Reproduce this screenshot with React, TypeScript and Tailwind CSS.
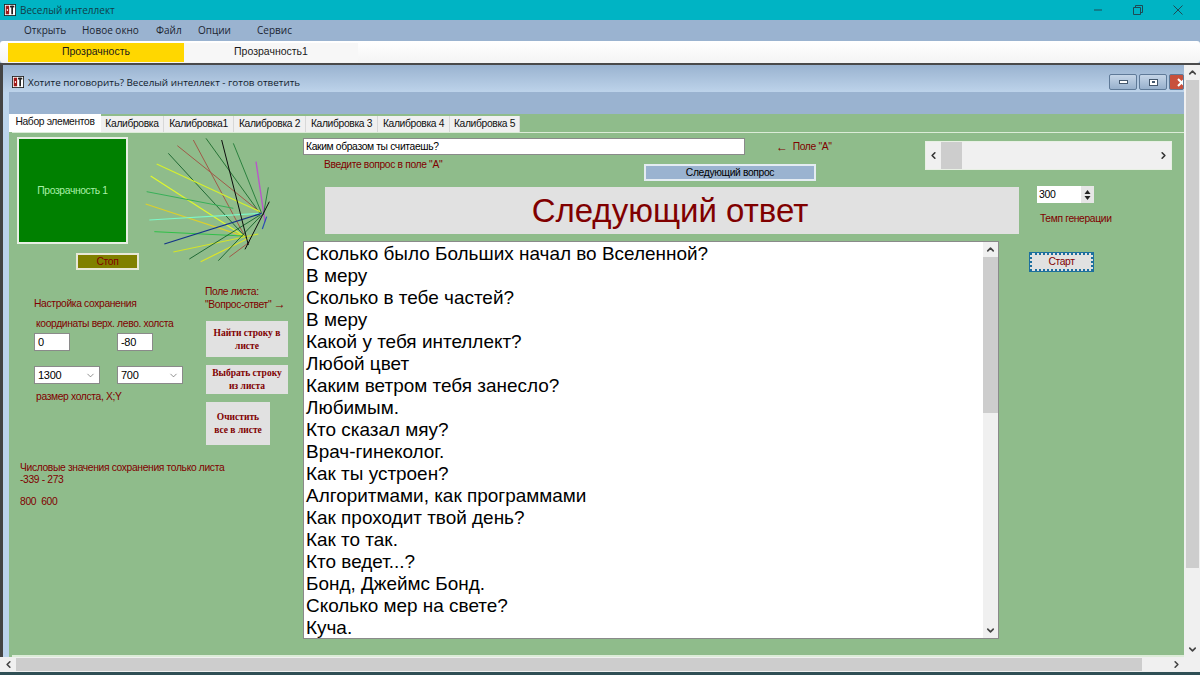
import type { ReactNode } from "react"
import { ChevronDown, ChevronLeft, ChevronRight, ChevronUp } from "lucide-react"

const tabs = [
  { label: "Калибровка", w: "w-[63px]" },
  { label: "Калибровка1", w: "w-[70px]" },
  { label: "Калибровка 2", w: "w-[72px]" },
  { label: "Калибровка 3", w: "w-[72px]" },
  { label: "Калибровка 4", w: "w-[72px]" },
  { label: "Калибровка 5", w: "w-[70px]" },
]

const menu = [
  { label: "Открыть", w: "w-[58px]" },
  { label: "Новое окно", w: "w-[74px]" },
  { label: "Файл", w: "w-[42px]" },
  { label: "Опции", w: "w-[59px]" },
  { label: "Сервис", w: "w-[60px]" },
]

const answers = [
  "Сколько было Больших начал во Вселенной?",
  "В меру",
  "Сколько в тебе частей?",
  "В меру",
  "Какой у тебя интеллект?",
  "Любой цвет",
  "Каким ветром тебя занесло?",
  "Любимым.",
  "Кто сказал мяу?",
  "Врач-гинеколог.",
  "Как ты устроен?",
  "Алгоритмами, как программами",
  "Как проходит твой день?",
  "Как то так.",
  "Кто ведет...?",
  "Бонд, Джеймс Бонд.",
  "Сколько мер на свете?",
  "Куча.",
]

// x1, y1, x2, y2, colour, width (3x crop coordinates)
const rays: [number, number, number, number, string, number][] = [
  [310, 40, 395, 250, "#1f7a35", 0.9],
  [228, 25, 390, 250, "#1a6a2a", 0.9],
  [190, 30, 345, 320, "#a05a48", 1],
  [142, 47, 395, 250, "#a05a48", 1],
  [115, 70, 350, 325, "#14602a", 0.9],
  [80, 102, 390, 245, "#d6f02c", 1.2],
  [62, 138, 345, 320, "#e0f82c", 1.2],
  [50, 185, 310, 235, "#38b058", 1],
  [47, 222, 345, 320, "#dcd02c", 1.2],
  [58, 270, 395, 250, "#7cf8c8", 1.2],
  [73, 305, 340, 318, "#30c048", 1],
  [130, 366, 385, 312, "#d4e428", 1.2],
  [178, 387, 390, 255, "#14602a", 0.9],
  [212, 395, 355, 325, "#dce428", 1.2],
  [265, 392, 395, 255, "#14602a", 0.9],
  [298, 381, 360, 335, "#a05a48", 1],
  [378, 95, 405, 275, "#b858c8", 1.4],
  [415, 172, 400, 255, "#1f7a35", 0.9],
  [410, 260, 397, 297, "#2a50b0", 1.2],
  [103, 342, 395, 250, "#143488", 1.3],
  [275, 30, 355, 345, "#0c0c0c", 1],
  [418, 215, 345, 358, "#0c0c0c", 1],
]

function AppIcon({ size }: { size: number }) {
  return (
    <svg width={size} height={size} viewBox="0 0 14 14" className="shrink-0">
      <rect x="0.5" y="0.5" width="13" height="13" fill="#fff" stroke="#222" />
      <rect x="2" y="2" width="4" height="10" fill="#a01818" />
      <rect x="7" y="2" width="5" height="2" fill="#222" />
      <rect x="8.5" y="2" width="2" height="10" fill="#222" />
      <rect x="3.3" y="6" width="1.4" height="2" fill="#fff" />
    </svg>
  )
}

function MdiButton({ children, className }: { children: ReactNode; className: string }) {
  return (
    <div className={`flex h-[16px] items-center justify-center rounded-[2px] border border-[#5f7a98] ${className}`}>
      {children}
    </div>
  )
}

function NumberField({ value }: { value: string }) {
  return (
    <div className="flex h-[18px] w-[36px] items-center border border-[#8a8a8a] bg-white pl-[3px] text-[11px] tracking-[-0.3px] text-black">
      {value}
    </div>
  )
}

function ComboField({ value, w }: { value: string; w: string }) {
  return (
    <div className={`flex h-[18px] items-center justify-between border border-[#8a8a8a] bg-white pl-[3px] pr-[3px] text-[11px] tracking-[-0.3px] text-black ${w}`}>
      {value}
      <ChevronDown size={11} strokeWidth={1.4} className="text-[#555]" />
    </div>
  )
}

function SerifButton({ lines, className }: { lines: string[]; className: string }) {
  return (
    <div className={`flex flex-col items-center justify-center bg-[#e1e1e1] pt-[1px] font-['Liberation_Serif',serif] text-[9.5px] font-bold leading-[13px] tracking-normal text-[#800000] ${className}`}>
      {lines.map((l) => (
        <div key={l}>{l}</div>
      ))}
    </div>
  )
}

function LeftColumn() {
  return (
    <div className="w-[291px] shrink-0 pl-[5px] pt-[4px]">
      <div className="flex">
        <div className="flex h-[107px] w-[111px] shrink-0 items-center justify-center border-2 border-[#e8efe4] bg-[#008000] text-[#a8f0a8]">
          Прозрачность 1
        </div>
        <svg width="150" height="150" viewBox="0 0 450 450" className="-mt-[7px] ml-[2px] -mb-[40px] shrink-0">
          {rays.map(([x1, y1, x2, y2, color, sw], i) => (
            <line key={i} x1={x1} y1={y1} x2={x2} y2={y2} stroke={color} strokeWidth={sw * 3} />
          ))}
        </svg>
      </div>
      <div className="ml-[59px] mt-[9px] flex h-[17px] w-[63px] items-center justify-center border-2 border-[#e8e8d8] bg-[#808000] text-[#800000]">
        Стоп
      </div>

      <div className="mt-[16px] flex">
        <div className="ml-[17px] w-[171px] pt-[11px]">
          <div className="h-[13px] leading-[13px]">Настройка сохранения</div>
          <div className="ml-[2px] mt-[7px] h-[13px] leading-[13px]">координаты верх. лево. холста</div>
          <div className="mt-[3px] flex gap-[47px]">
            <NumberField value="0" />
            <NumberField value="-80" />
          </div>
          <div className="mt-[15px] flex gap-[17px]">
            <ComboField value="1300" w="w-[66px]" />
            <ComboField value="700" w="w-[66px]" />
          </div>
          <div className="ml-[2px] mt-[6px] h-[13px] leading-[13px]">размер холста, X;Y</div>
        </div>
        <div className="w-[90px]">
          <div className="leading-[12px]">
            Поле листа:
            <br />
            "Вопрос-ответ" <span className="text-[12px]">→</span>
          </div>
          <SerifButton lines={["Найти строку в", "листе"]} className="ml-[1px] mt-[10px] h-[36px] w-[82px]" />
          <SerifButton lines={["Выбрать строку", "из листа"]} className="ml-[1px] mt-[8px] h-[29px] w-[82px]" />
          <SerifButton lines={["Очистить", "все в листе"]} className="ml-[1px] mt-[8px] h-[43px] w-[64px]" />
        </div>
      </div>

      <div className="ml-[3px] mt-[17px] leading-[12px]">
        <div>Числовые значения сохранения только листа</div>
        <div>-339 - 273</div>
        <div className="mt-[10px]">800&nbsp;&nbsp;600</div>
      </div>
    </div>
  )
}

function CenterColumn() {
  return (
    <div className="min-w-0 flex-1 pt-[5px]">
      <div className="flex h-[40px]">
        <div className="w-[537px] shrink-0">
          <div className="flex items-center">
            <div className="flex h-[17px] w-[442px] items-center border border-[#8a8a8a] bg-white pl-[2px] text-black">
              Каким образом ты считаешь?
            </div>
            <div className="ml-[31px] flex items-center gap-[5px]">
              <span className="text-[12px] leading-[12px]">←</span>
              Поле "А"
            </div>
          </div>
          <div className="flex">
            <div className="ml-[21px] mt-[3px] w-[320px] leading-[13px]">Введите вопрос в поле "А"</div>
            <div className="mt-[9px] flex h-[17px] w-[172px] items-center justify-center border-2 border-[#e4ecf2] bg-[#9ab3d0] text-black">
              Следующий вопрос
            </div>
          </div>
        </div>
        <div className="ml-[85px] mt-[3px] flex h-[29px] w-[247px] items-center justify-between border border-[#e8f0e4] bg-[#f0f0f0] text-[#333]">
          <div className="flex h-full items-center">
            <ChevronLeft size={11} strokeWidth={3.5} className="ml-[2px]" />
            <div className="ml-[2px] h-full w-[21px] bg-[#cdcdcd]" />
          </div>
          <ChevronRight size={11} strokeWidth={3.5} className="mr-[2px]" />
        </div>
      </div>

      <div className="mt-[9px] flex">
        <div className="w-[716px] shrink-0">
          <div className="ml-[22px] flex h-[47px] w-[694px] items-center justify-center bg-[#e1e1e1] pr-[4px] text-[33px] tracking-normal whitespace-nowrap text-[#800000]">
            Следующий ответ
          </div>
          <div className="mt-[7px] flex h-[398px] w-[696px] border border-[#8a8a8a] bg-white">
            <div className="min-w-0 flex-1 pl-[2px] pt-[1px] text-[18.95px] leading-[22px] tracking-normal text-black">
              {answers.map((line, i) => (
                <div key={i} className="h-[22px] whitespace-nowrap">
                  {line}
                </div>
              ))}
            </div>
            <div className="flex w-[15px] shrink-0 flex-col items-center bg-[#f0f0f0] text-[#444]">
              <div className="flex h-[15px] items-center">
                <ChevronUp size={11} strokeWidth={3.5} />
              </div>
              <div className="h-[156px] w-full bg-[#cdcdcd]" />
              <div className="mt-auto flex h-[15px] items-center">
                <ChevronDown size={11} strokeWidth={3.5} />
              </div>
            </div>
          </div>
        </div>

        <div className="ml-[11px] w-[100px]">
          <div className="-mt-[1px] ml-[7px] flex h-[17px] w-[57px] items-center justify-between bg-white pl-[2px] text-[10.5px] tracking-[-0.3px] text-black">
            300
            <div className="flex h-full w-[13px] flex-col items-center justify-center bg-[#e6e6e6] text-[#222]">
              <svg width="7" height="6" viewBox="0 0 7 6"><path d="M3.5 1 L6.5 5 H0.5 Z" fill="currentColor" /></svg>
              <svg width="7" height="6" viewBox="0 0 7 6"><path d="M3.5 5 L6.5 1 H0.5 Z" fill="currentColor" /></svg>
            </div>
          </div>
          <div className="ml-[10px] mt-[9px] h-[13px] leading-[13px]">Темп генерации</div>
          <div className="mt-[28px] flex h-[18px] w-[63px] items-center justify-center border-2 border-dotted border-[#1d6f9e] bg-[#e1e1e1] text-[#800000] outline-1 outline-[#1d6f9e]">
            Старт
          </div>
        </div>
      </div>
    </div>
  )
}

export default function App() {
  return (
    <div className="flex h-[675px] w-[1200px] flex-col overflow-hidden bg-[#f0f0f0] font-['Liberation_Sans',Arial,sans-serif] text-[10.3px] tracking-[-0.35px] text-[#800000]">
      {/* main window chrome */}
      <div className="flex h-[20px] shrink-0 items-center bg-[#00b4c4] pl-[4px] font-['Open_Sans',sans-serif] text-[10px] tracking-normal text-[#123c48]">
        <AppIcon size={12} />
        <span className="ml-[4px]">Веселый интеллект</span>
        <div className="ml-auto flex items-center text-[#1f4a55]">
          <svg width="10" height="10" viewBox="0 0 10 10" className="mr-[30px]"><path d="M1 5 H9" stroke="currentColor" fill="none" /></svg>
          <svg width="10" height="10" viewBox="0 0 10 10" className="mr-[30px]"><path d="M0.5 2.5 H7.5 V9.5 H0.5 Z M2.5 2.5 V0.5 H9.5 V7.5 H7.5" stroke="currentColor" fill="none" /></svg>
          <svg width="10" height="10" viewBox="0 0 10 10" className="mr-[17px]"><path d="M0.5 0.5 L9.5 9.5 M9.5 0.5 L0.5 9.5" stroke="currentColor" fill="none" /></svg>
        </div>
      </div>
      <div className="flex h-[21px] shrink-0 items-center bg-[#9ab3d0] pl-[24px] font-['Open_Sans',sans-serif] text-[10px] tracking-normal text-[#1a2530]">
        {menu.map((m) => (
          <div key={m.label} className={m.w}>{m.label}</div>
        ))}
      </div>
      <div className="flex h-[22px] shrink-0 items-center bg-[#9ab3d0]">
        <div className="flex h-full w-full items-center rounded-[3px] bg-gradient-to-b from-white to-[#f4f4f4] pl-[8px] text-[10.5px] tracking-normal text-[#1a1a1a]">
          <div className="flex h-[19px] w-[176px] items-center justify-center bg-[#ffd700]">Прозрачность</div>
          <div className="flex h-[19px] w-[174px] items-center justify-center bg-[#f7f7f7]">Прозрачность1</div>
        </div>
      </div>
      <div className="h-[2px] shrink-0 bg-[#4a4a4a]" />

      <div className="flex min-h-0 flex-1">
        <div className="flex min-w-0 flex-1 border-l-[3px] border-[#444]">
          <div className="flex min-w-0 flex-1 flex-col bg-[#bcd4ec]">
            {/* child window */}
            <div className="flex h-[27px] shrink-0 items-center bg-gradient-to-b from-[#9ab3d0] to-[#bdd3ea] pl-[9px] pt-[7px] font-['Open_Sans',sans-serif] text-[9.85px] tracking-normal text-[#10202c]">
              <AppIcon size={12} />
              <span className="ml-[4px]">Хотите поговорить? Веселый интеллект - готов ответить</span>
              <div className="ml-auto flex h-[16px] gap-[2px] overflow-hidden">
                <MdiButton className="w-[28px] bg-gradient-to-b from-[#c6d6e8] to-[#97b0cc]">
                  <div className="h-[4px] w-[9px] border border-[#44586e] bg-white" />
                </MdiButton>
                <MdiButton className="w-[28px] bg-gradient-to-b from-[#c6d6e8] to-[#97b0cc]">
                  <div className="flex h-[7px] w-[9px] items-center justify-center border border-[#44586e] bg-white">
                    <div className="h-[2px] w-[3px] bg-[#44586e]" />
                  </div>
                </MdiButton>
                <MdiButton className="w-[15px] justify-start overflow-hidden bg-[#c8503c] pl-[7px]">
                  <svg width="9" height="9" viewBox="0 0 9 9" className="shrink-0"><path d="M1 1 L8 8 M8 1 L1 8" stroke="#fff" strokeWidth="2" fill="none" /></svg>
                </MdiButton>
              </div>
            </div>
            <div className="ml-[6px] h-[22px] shrink-0 bg-[#9ab3d0]" />

            <div className="ml-[6px] flex min-h-0 flex-1 flex-col bg-[#8fbc8b]">
              <div className="flex h-[18px] shrink-0 items-end text-[#111]">
                <div className="flex h-[18px] w-[92px] items-center justify-center bg-white pb-[2px]">Набор элементов</div>
                {tabs.map((t) => (
                  <div key={t.label} className={`flex h-[16px] items-center justify-center whitespace-nowrap border-r border-[#d8d8d8] bg-[#f0f0f0] ${t.w}`}>
                    {t.label}
                  </div>
                ))}
              </div>
              <div className="ml-[3px] flex min-h-0 flex-1 border-t border-b-2 border-t-[#dcecd8] border-b-[#dcecd8]">
                <LeftColumn />
                <CenterColumn />
              </div>
            </div>
          </div>
        </div>

        {/* outer vertical scrollbar */}
        <div className="flex w-[16px] shrink-0 flex-col items-center bg-[#f0f0f0] text-[#444]">
          <div className="flex h-[15px] items-center"><ChevronUp size={11} strokeWidth={3.5} /></div>
          <div className="h-[488px] w-[13px] bg-[#cdcdcd]" />
          <div className="mt-auto flex h-[15px] items-center"><ChevronDown size={11} strokeWidth={3.5} /></div>
        </div>
      </div>

      {/* outer horizontal scrollbar */}
      <div className="flex h-[15px] shrink-0 items-center bg-[#f0f0f0] text-[#444]">
        <div className="flex w-[16px] justify-center"><ChevronLeft size={11} strokeWidth={3.5} /></div>
        <div className="h-[13px] w-[1126px] bg-[#cdcdcd]" />
        <div className="ml-auto mr-[18px]"><ChevronRight size={11} strokeWidth={3.5} /></div>
      </div>
      <div className="h-[3px] shrink-0 bg-[#2f4f55]" />
    </div>
  )
}
